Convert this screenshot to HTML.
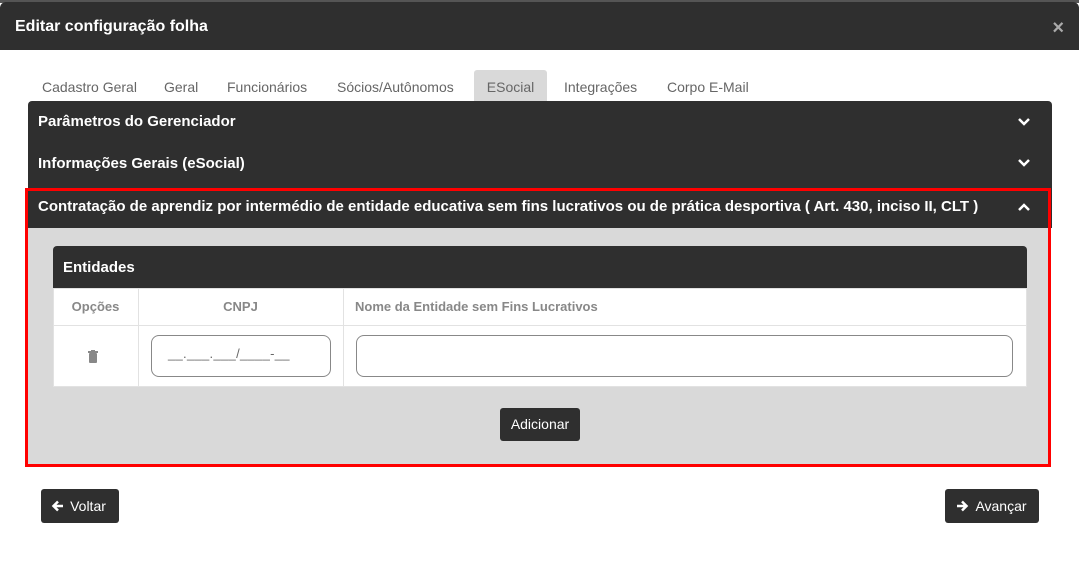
<!DOCTYPE html>
<html><head><meta charset="utf-8"><style>
*{box-sizing:border-box;margin:0;padding:0}
body{width:1079px;height:585px;background:#fff;font-family:"Liberation Sans",sans-serif;position:relative;overflow:hidden}
.abs{position:absolute}
.top{left:0;top:0;width:1079px;height:3px;background:#555}
.hdr{left:0;top:2px;width:1079px;height:48px;background:#2f2f2f;border-radius:6px 6px 0 0;color:#fff;font-weight:bold;font-size:16px;line-height:50px;padding-left:15px}
.close{right:15px;top:18px;color:#aaa;font-size:20px;font-weight:bold;line-height:20px}
.tab{top:70px;height:31px;line-height:34px;font-size:14px;color:#666}
.acc{left:28px;width:1024px;background:#2f2f2f;color:#fff;font-weight:bold;font-size:15px;padding-left:10px}
.btn{background:#2f2f2f;color:#fff;font-size:14px;border-radius:3px;text-align:center}
</style></head><body>
<div class="abs top"></div>
<div class="abs hdr">Editar configuração folha</div>
<div class="abs close">×</div>
<div class="abs tab" style="left:42px">Cadastro Geral</div>
<div class="abs tab" style="left:164px">Geral</div>
<div class="abs tab" style="left:227px">Funcionários</div>
<div class="abs tab" style="left:337px">Sócios/Autônomos</div>
<div class="abs tab" style="left:474px;width:73px;background:#d9d9d9;border-radius:3px 3px 0 0;text-align:center">ESocial</div>
<div class="abs tab" style="left:564px">Integrações</div>
<div class="abs tab" style="left:667px">Corpo E-Mail</div>

<div class="abs acc" style="top:101px;height:41px;line-height:42px;border-radius:4px 4px 0 0">Parâmetros do Gerenciador</div>
<div class="abs acc" style="top:142px;height:42px;line-height:43px">Informações Gerais (eSocial)</div>
<div class="abs acc" style="top:184px;height:44px;line-height:46px">Contratação de aprendiz por intermédio de entidade educativa sem fins lucrativos ou de prática desportiva ( Art. 430, inciso II, CLT )</div>
<svg class="abs" style="left:1017px;top:117px" width="14" height="10"><path d="M2 2l5 5 5-5" stroke="#fff" stroke-width="2.5" fill="none"/></svg>
<svg class="abs" style="left:1017px;top:158px" width="14" height="10"><path d="M2 2l5 5 5-5" stroke="#fff" stroke-width="2.5" fill="none"/></svg>
<svg class="abs" style="left:1017px;top:202px" width="14" height="10"><path d="M2 8l5-5 5 5" stroke="#fff" stroke-width="2.5" fill="none"/></svg>
<div class="abs" style="left:28px;top:228px;width:1021px;height:237px;background:#d9d9d9"></div>
<div class="abs" style="left:25px;top:188px;width:1026px;height:279px;border:3px solid #f00"></div>

<div class="abs" style="left:53px;top:246px;width:974px;height:42px;background:#2f2f2f;border-radius:4px 4px 0 0;color:#fff;font-weight:bold;font-size:15px;line-height:44px;padding-left:10px">Entidades</div>
<div class="abs" style="left:53px;top:288px;width:974px;height:99px;background:#fff;border:1px solid #e2e2e2"></div>
<div class="abs" style="left:53px;top:325px;width:974px;height:1px;background:#e2e2e2"></div>
<div class="abs" style="left:138px;top:288px;width:1px;height:99px;background:#e2e2e2"></div>
<div class="abs" style="left:343px;top:288px;width:1px;height:99px;background:#e2e2e2"></div>
<div class="abs" style="left:53px;top:299px;width:85px;text-align:center;font-size:13px;font-weight:bold;color:#888">Opções</div>
<div class="abs" style="left:138px;top:299px;width:205px;text-align:center;font-size:13px;font-weight:bold;color:#888">CNPJ</div>
<div class="abs" style="left:355px;top:299px;font-size:13px;font-weight:bold;color:#888">Nome da Entidade sem Fins Lucrativos</div>
<svg class="abs" style="left:88px;top:350px" width="10" height="13"><rect x="0" y="1" width="10" height="2" fill="#888"/><rect x="3" y="0" width="4" height="2" fill="#888"/><rect x="1" y="3" width="8" height="10" rx="1" fill="#888"/></svg>
<div class="abs" style="left:151px;top:335px;width:180px;height:42px;border:1px solid #888;border-radius:8px;font-size:13px;color:#666;padding:10px 0 0 16px;letter-spacing:0.3px">__.___.___/____-__</div>
<div class="abs" style="left:356px;top:335px;width:657px;height:42px;border:1px solid #888;border-radius:8px"></div>
<div class="abs btn" style="left:500px;top:408px;width:80px;height:33px;line-height:33px">Adicionar</div>
<div class="abs btn" style="left:41px;top:489px;width:78px;height:34px;line-height:34px;padding-left:16px">Voltar</div>
<svg class="abs" style="left:51px;top:499px" width="14" height="14"><path d="M12 7H3M7 2.5L2.5 7 7 11.5" stroke="#fff" stroke-width="2.5" fill="none"/></svg>
<div class="abs btn" style="left:945px;top:489px;width:94px;height:34px;line-height:34px;padding-left:18px">Avançar</div>
<svg class="abs" style="left:955px;top:499px" width="14" height="14"><path d="M2 7h9M7 2.5L11.5 7 7 11.5" stroke="#fff" stroke-width="2.5" fill="none"/></svg>
</body></html>
